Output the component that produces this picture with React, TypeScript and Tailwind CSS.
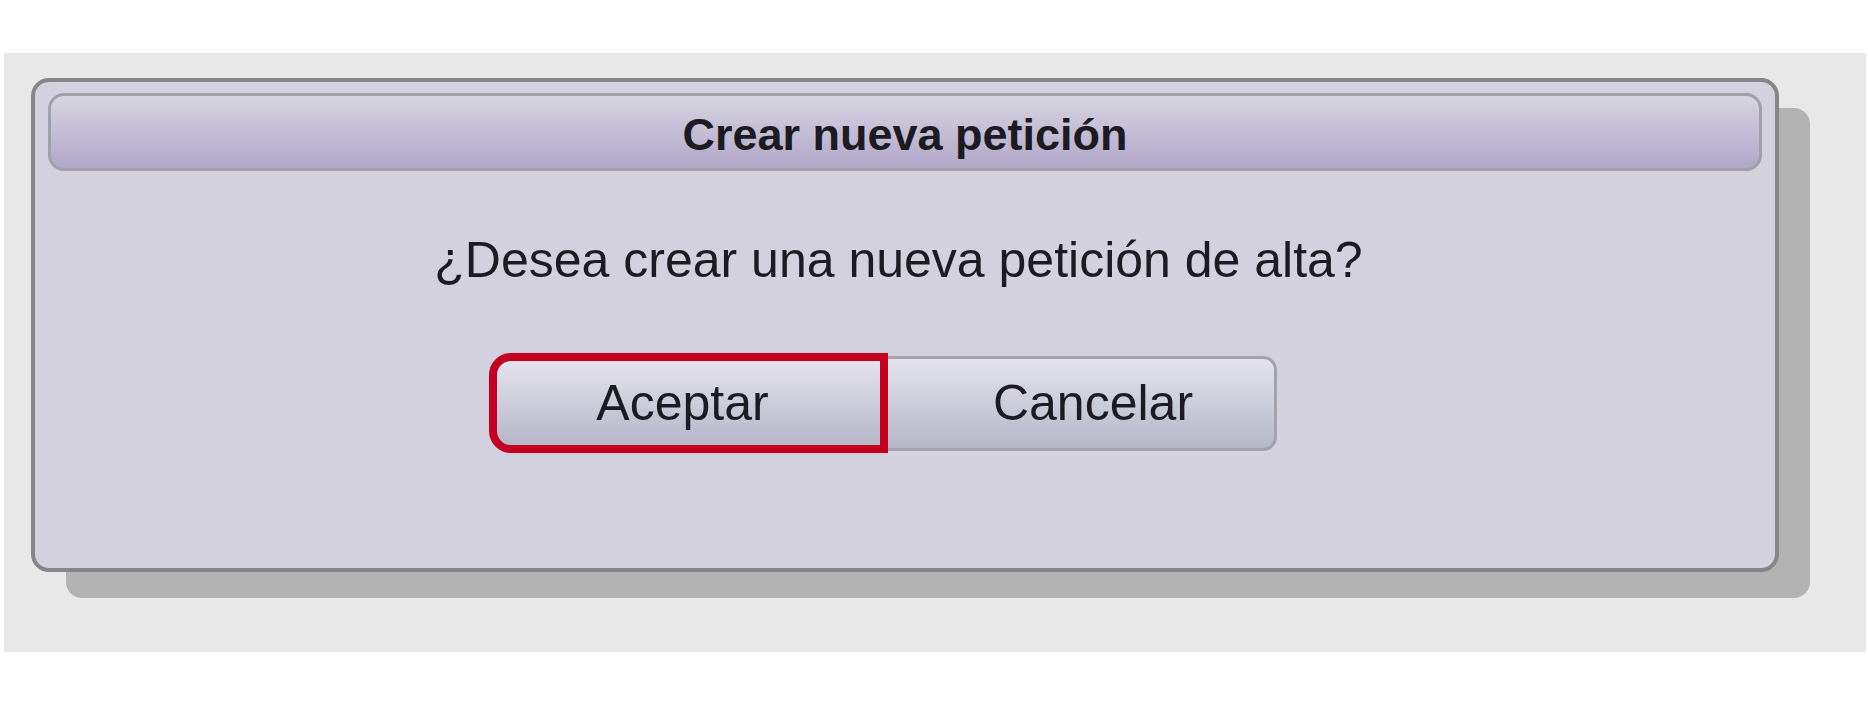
export default function App() {
  return (
    <div className="h-[702px] w-[1868px] bg-white pt-[53px] pl-[4px] font-['Liberation_Sans',Arial,sans-serif] text-[#1d1b22]">
      <div className="h-[599px] w-[1862px] bg-[#e8e8e8] pl-[27px] pt-[25px]">
        <div className="flex h-[494px] w-[1748px] flex-col rounded-[18px] border-4 border-[#868688] bg-[#d2d1dd] px-[13px] pt-[11px] shadow-[33px_28px_0_-2px_#b2b2b2]">
          <div className="flex h-[78px] items-center justify-center rounded-[16px] border-[3px] border-[#a0a0a8] bg-gradient-to-b from-[#d6d4e0] to-[#b1a7c9] pt-[6px]">
            <h1 className="text-[45px] font-bold">Crear nueva petición</h1>
          </div>

          <p className="mt-[64px] pr-[13px] text-center text-[50px] leading-none">
            ¿Desea crear una nueva petición de alta?
          </p>

          <div className="mt-[68px] flex items-center justify-center pr-[44px]">
            <button className="flex h-[100px] w-[399px] items-center justify-center rounded-l-[22px] border-[8px] border-[#c5001f] bg-gradient-to-b from-[#e4e3ed] to-[#b5b7c7] pr-[12px] text-[50px] leading-none">
              Aceptar
            </button>
            <button className="flex h-[95px] w-[389px] items-center justify-center rounded-r-[14px] border-[3px] border-l-0 border-[#a3a3ab] bg-gradient-to-b from-[#e4e3ed] to-[#b5b7c7] pl-[24px] text-[50px] leading-none">
              Cancelar
            </button>
          </div>
        </div>
      </div>
    </div>
  );
}
